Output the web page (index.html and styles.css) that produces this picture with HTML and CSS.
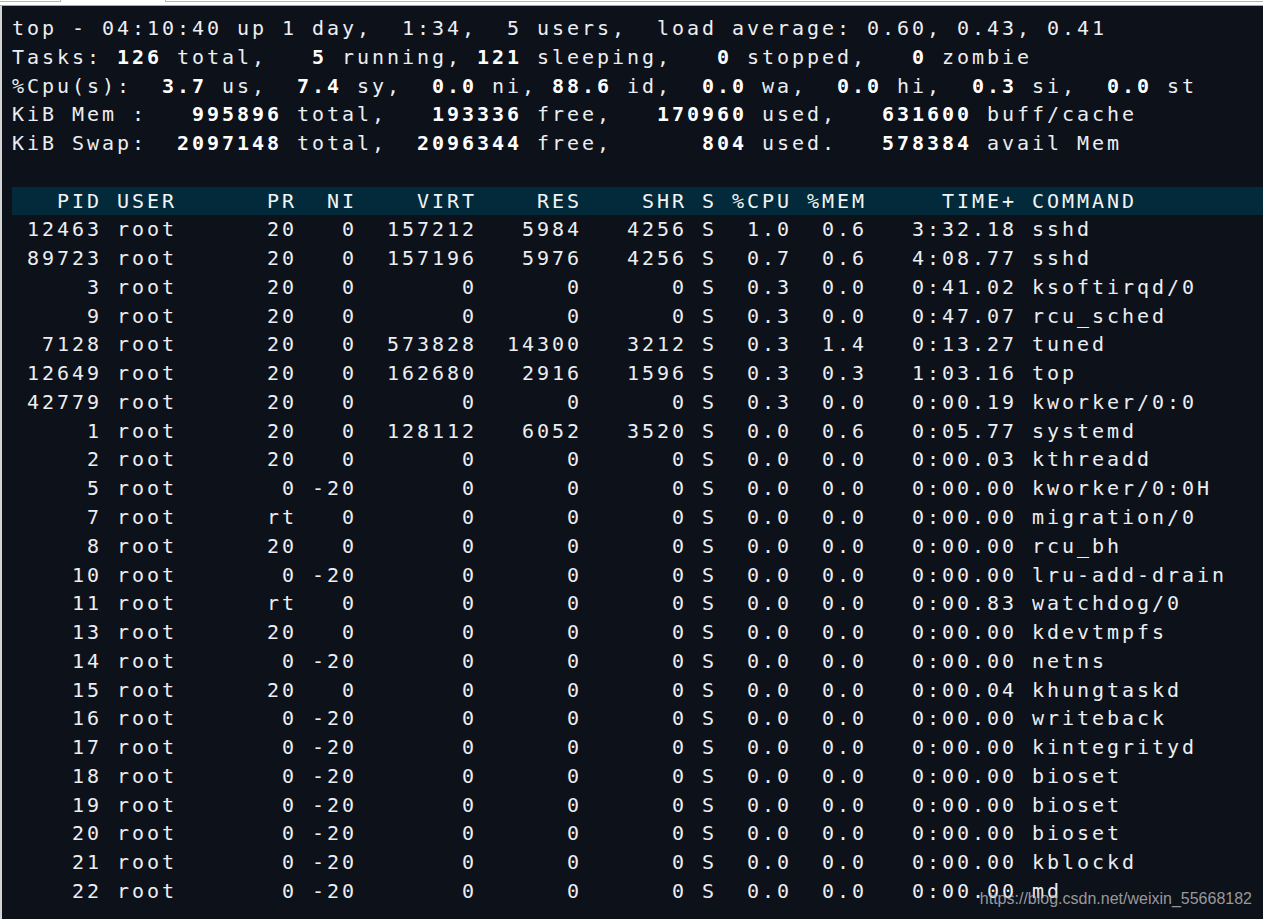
FILE: index.html
```html
<!DOCTYPE html>
<html>
  <head>
    <meta charset="utf-8" />
    <link rel="stylesheet" href="styles.css">
  </head>
  <body>
    <div id="tabs">
      <span class="tab-left"></span>
      <span class="tab-active"></span>
      <span class="tab-right"></span>
    </div>
    <div id="term">
      <div class="line">top - 04:10:40 up 1 day,  1:34,  5 users,  load average: 0.60, 0.43, 0.41</div>
      <div class="line">Tasks: <b>126</b> total,   <b>5</b> running, <b>121</b> sleeping,   <b>0</b> stopped,   <b>0</b> zombie</div>
      <div class="line">%Cpu(s):  <b>3.7</b> us,  <b>7.4</b> sy,  <b>0.0</b> ni, <b>88.6</b> id,  <b>0.0</b> wa,  <b>0.0</b> hi,  <b>0.3</b> si,  <b>0.0</b> st</div>
      <div class="line">KiB Mem :   <b>995896</b> total,   <b>193336</b> free,   <b>170960</b> used,   <b>631600</b> buff/cache</div>
      <div class="line">KiB Swap:  <b>2097148</b> total,  <b>2096344</b> free,      <b>804</b> used.   <b>578384</b> avail Mem</div>
      <div class="line"> </div>
      <div class="line head">   PID USER      PR  NI    VIRT    RES    SHR S %CPU %MEM     TIME+ COMMAND</div>
      <div class="line"> 12463 root      20   0  157212   5984   4256 S  1.0  0.6   3:32.18 sshd</div>
      <div class="line"> 89723 root      20   0  157196   5976   4256 S  0.7  0.6   4:08.77 sshd</div>
      <div class="line">     3 root      20   0       0      0      0 S  0.3  0.0   0:41.02 ksoftirqd/0</div>
      <div class="line">     9 root      20   0       0      0      0 S  0.3  0.0   0:47.07 rcu_sched</div>
      <div class="line">  7128 root      20   0  573828  14300   3212 S  0.3  1.4   0:13.27 tuned</div>
      <div class="line"> 12649 root      20   0  162680   2916   1596 S  0.3  0.3   1:03.16 top</div>
      <div class="line"> 42779 root      20   0       0      0      0 S  0.3  0.0   0:00.19 kworker/0:0</div>
      <div class="line">     1 root      20   0  128112   6052   3520 S  0.0  0.6   0:05.77 systemd</div>
      <div class="line">     2 root      20   0       0      0      0 S  0.0  0.0   0:00.03 kthreadd</div>
      <div class="line">     5 root       0 -20       0      0      0 S  0.0  0.0   0:00.00 kworker/0:0H</div>
      <div class="line">     7 root      rt   0       0      0      0 S  0.0  0.0   0:00.00 migration/0</div>
      <div class="line">     8 root      20   0       0      0      0 S  0.0  0.0   0:00.00 rcu_bh</div>
      <div class="line">    10 root       0 -20       0      0      0 S  0.0  0.0   0:00.00 lru-add-drain</div>
      <div class="line">    11 root      rt   0       0      0      0 S  0.0  0.0   0:00.83 watchdog/0</div>
      <div class="line">    13 root      20   0       0      0      0 S  0.0  0.0   0:00.00 kdevtmpfs</div>
      <div class="line">    14 root       0 -20       0      0      0 S  0.0  0.0   0:00.00 netns</div>
      <div class="line">    15 root      20   0       0      0      0 S  0.0  0.0   0:00.04 khungtaskd</div>
      <div class="line">    16 root       0 -20       0      0      0 S  0.0  0.0   0:00.00 writeback</div>
      <div class="line">    17 root       0 -20       0      0      0 S  0.0  0.0   0:00.00 kintegrityd</div>
      <div class="line">    18 root       0 -20       0      0      0 S  0.0  0.0   0:00.00 bioset</div>
      <div class="line">    19 root       0 -20       0      0      0 S  0.0  0.0   0:00.00 bioset</div>
      <div class="line">    20 root       0 -20       0      0      0 S  0.0  0.0   0:00.00 bioset</div>
      <div class="line">    21 root       0 -20       0      0      0 S  0.0  0.0   0:00.00 kblockd</div>
      <div class="line">    22 root       0 -20       0      0      0 S  0.0  0.0   0:00.00 md</div>
      <div class="watermark">https://blog.csdn.net/weixin_55668182</div>
    </div>
  </body>
</html>
```
FILE: styles.css
```css
/* reset */
* {
  margin: 0;
  padding: 0;
  box-sizing: border-box;
}

html,
body {
  height: 100%;
}

body {
  background-color: #fff;
  overflow: hidden;
}

/* window tab strip on top */
#tabs {
  height: 6px;
  display: flex;
  border-bottom: 1px solid #a9a9a9;
}

.tab-left {
  width: 61px;
  height: 2px;
  border-bottom: 1px solid #b5b5b5;
  border-right: 1px solid #b5b5b5;
}

.tab-active {
  width: 104px;
}

.tab-right {
  flex: 1;
  height: 2px;
  border-bottom: 1px solid #b5b5b5;
  border-left: 1px solid #b5b5b5;
}

/* terminal */
#term {
  position: relative;
  height: calc(100% - 6px);
  padding: 8px 0 0 10px;
  background-color: #0d111a;
  border-left: 2px solid #d4d4d4;
  color: #eceef1;
  font-family: 'DejaVu Sans Mono', 'Liberation Mono', monospace;
  font-size: 20px;
  letter-spacing: calc(15px - 1ch);
}

.line {
  white-space: pre;
  height: 28.77px;
  line-height: 28.77px;
}

.line b {
  color: #fff;
  font-weight: bold;
}

.head {
  background-color: #022a3a;
  color: #f2f4f6;
}

/* blog watermark laid over the last row */
.watermark {
  position: absolute;
  right: 11px;
  bottom: 11px;
  font-family: 'Liberation Sans', Arial, sans-serif;
  font-size: 16px;
  letter-spacing: 0;
  color: rgba(190, 190, 190, 0.8);
}
```
